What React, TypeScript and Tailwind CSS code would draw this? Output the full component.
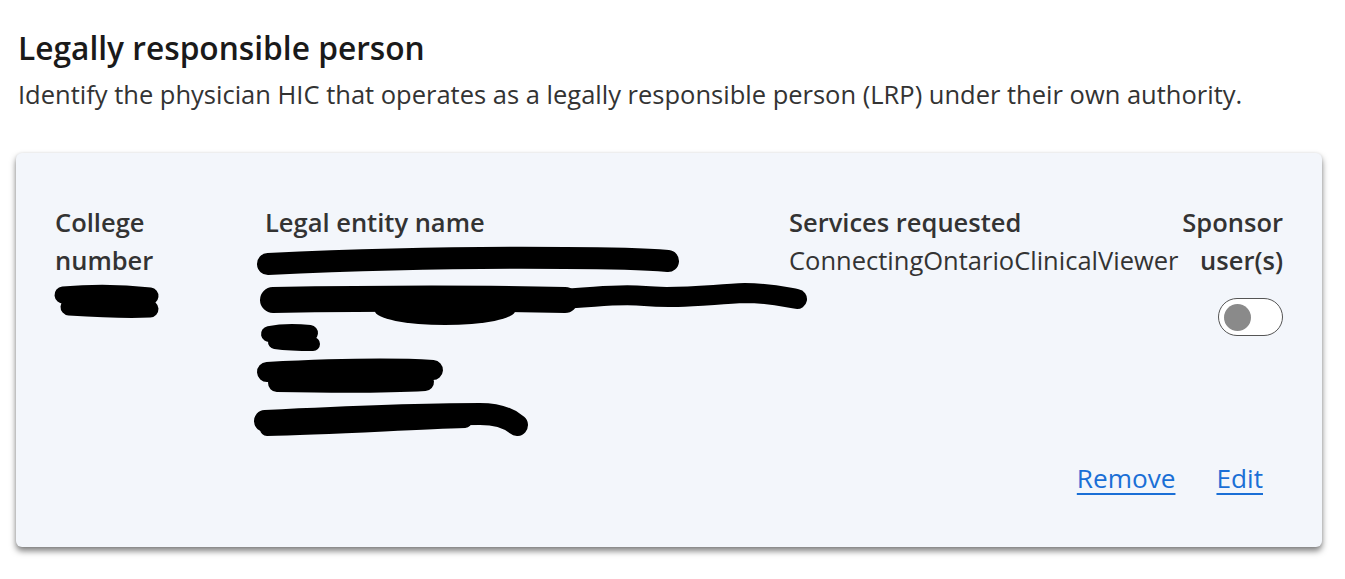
import React from "react";

function Scribble({ w, h, children, className = "" }: { w: number; h: number; children: React.ReactNode; className?: string }) {
  return (
    <svg width={w} height={h} viewBox={`0 0 ${w} ${h}`} className={`block overflow-visible ${className}`} fill="none" stroke="#000" strokeLinecap="round" strokeLinejoin="round">
      {children}
    </svg>
  );
}

export default function App() {
  return (
    <div className="min-h-screen bg-white px-4 pt-[26px] text-[#333]" style={{ fontFamily: '"Open Sans", "Noto Sans", sans-serif' }}>
      <h2 className="ml-[2px] text-[31.7px] font-semibold leading-[44px] text-[#1a1a1a]">Legally responsible person</h2>
      <p className="ml-[2px] mt-[8px] text-[25.5px] leading-[32px] text-[#333]">
        Identify the physician HIC that operates as a legally responsible person (LRP) under their own authority.
      </p>

      <div className="mt-[43px] w-[1306px] rounded-[6px] bg-[#f3f6fb] px-[39px] pb-[50px] pt-[50px] shadow-[0_4px_6px_rgba(0,0,0,0.5),0_0_3px_rgba(0,0,0,0.08)]">
        <div className="grid grid-cols-[210px_524px_1fr_auto] text-[25.5px] leading-[38px]">
          <div>
            <div className="font-semibold">College<br />number</div>
            <Scribble w={110} h={40}>
              <path d="M8 16 C 40 13, 70 14, 95 17" strokeWidth={17} />
              <path d="M14 28 C 45 30, 75 31, 95 30" strokeWidth={17} />
            </Scribble>
          </div>
          <div>
            <div className="font-semibold">Legal entity name</div>
            <Scribble w={540} h={196}>
              <path d="M3 23 C 90 19, 200 16, 300 17 C 350 17, 380 18, 403 20" strokeWidth={22} />
              <path d="M8 59 C 120 57, 220 57, 300 59" strokeWidth={26} />
              <path d="M290 58 C 330 57, 350 52, 380 55 C 410 58, 440 54, 480 52 C 505 52, 520 56, 532 58" strokeWidth={20} />
              <ellipse cx="180" cy="70" rx="70" ry="14" fill="#000" stroke="none" />
              <path d="M4 93 C 20 90, 35 91, 45 92" strokeWidth={16} />
              <path d="M10 101 C 25 103, 38 103, 48 103" strokeWidth={14} />
              <path d="M2 131 C 60 128, 120 126, 168 129" strokeWidth={20} />
              <path d="M12 142 C 60 143, 110 144, 160 141" strokeWidth={18} />
              <path d="M0 180 C 80 176, 170 173, 215 173 C 235 173, 245 178, 252 184" strokeWidth={22} />
              <path d="M2 188 C 60 187, 140 182, 200 180" strokeWidth={14} />
            </Scribble>
          </div>
          <div>
            <div className="font-semibold">Services requested</div>
            <div>ConnectingOntarioClinicalViewer</div>
          </div>
          <div className="flex flex-col items-end">
            <div className="text-right font-semibold">Sponsor<br />user(s)</div>
            <div className="mt-[19px] flex h-[38px] w-[65px] items-center rounded-full border border-[#555] bg-white px-[5px]">
              <div className="h-[27px] w-[27px] rounded-full bg-[#8a8a8a]" />
            </div>
          </div>
        </div>
        <div className="mt-[22px] flex justify-end gap-[41px] pr-[20px] text-[26.2px] leading-[38px]">
          <a href="#" className="text-[#1a6fd6] underline decoration-[2px] underline-offset-[5px]">Remove</a>
          <a href="#" className="text-[#1a6fd6] underline decoration-[2px] underline-offset-[5px]">Edit</a>
        </div>
      </div>
    </div>
  );
}
